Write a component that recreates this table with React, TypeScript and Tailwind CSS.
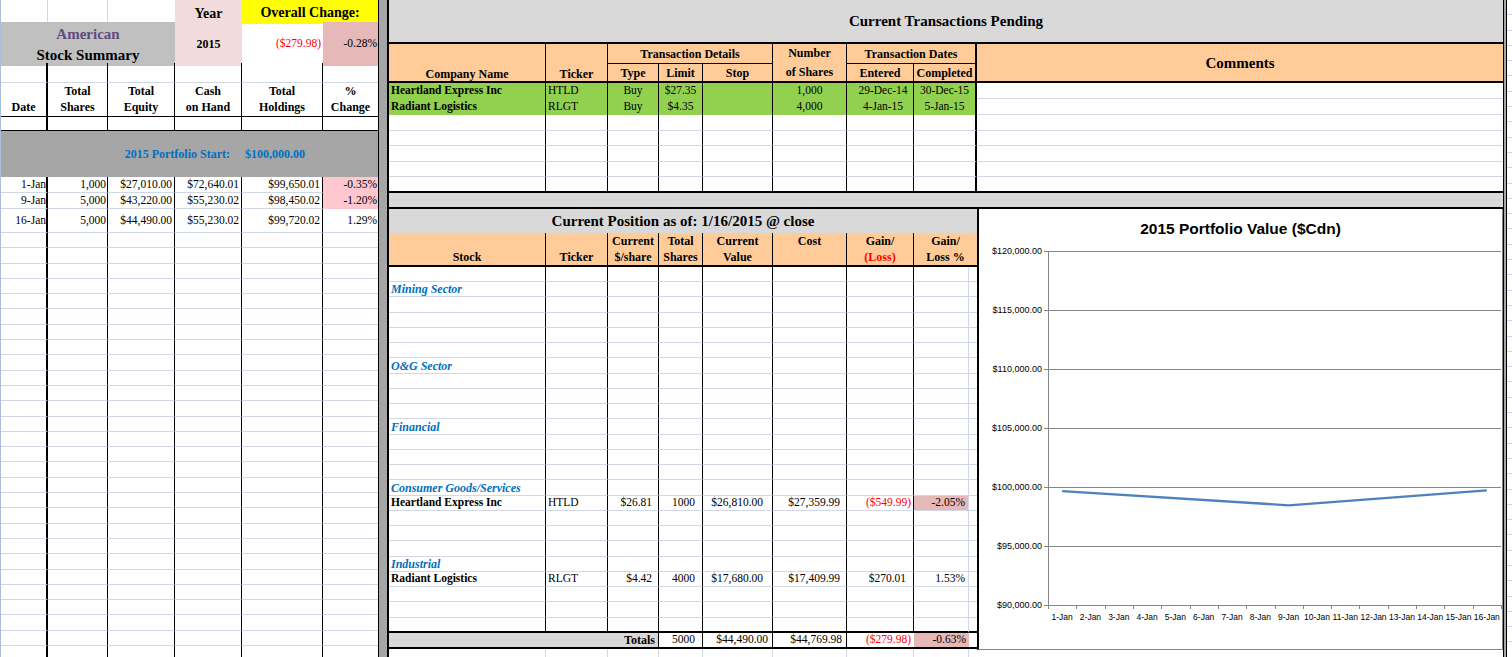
import React from "react";

// ---------------------------------------------------------------------------
// Column templates + border presets (spreadsheet look)
// ---------------------------------------------------------------------------

const GRIDLINE = "border-b border-b-[#d0d7e5]";
const BLACK_R = "border-r border-r-black";

const L_COLS = "grid grid-cols-[47px_60px_67px_67px_81px_55px]";
const L_V = ["border-r-2 border-r-black", BLACK_R, BLACK_R, BLACK_R, BLACK_R, ""];

const T_COLS = "grid grid-cols-[157px_62px_51px_44px_70px_74px_67px_63px_526px]";
const T_V = [BLACK_R, BLACK_R, BLACK_R, BLACK_R, BLACK_R, BLACK_R, BLACK_R, "border-r-2 border-r-black", ""];

const P_COLS = "grid grid-cols-[157px_62px_51px_44px_70px_74px_67px_55px_8px]";
const P_V = [BLACK_R, BLACK_R, BLACK_R, BLACK_R, BLACK_R, BLACK_R, BLACK_R, "border-r border-r-[#d0d7e5]", ""];
const P_LIGHT = [
  "border-r border-r-[#d0d7e5]",
  "border-r border-r-[#d0d7e5]",
  "border-r border-r-[#d0d7e5]",
  "border-r border-r-[#d0d7e5]",
  "border-r border-r-[#d0d7e5]",
  "border-r border-r-[#d0d7e5]",
  "border-r border-r-[#d0d7e5]",
  "border-r border-r-[#d0d7e5]",
  "",
];

// ---------------------------------------------------------------------------
// Data
// ---------------------------------------------------------------------------

const SUMMARY_ROWS = [
  { h: "h-[16px]", cells: ["1-Jan", "1,000", "$27,010.00", "$72,640.01", "$99,650.01", "-0.35%"], flag: true },
  { h: "h-[16px]", cells: ["9-Jan", "5,000", "$43,220.00", "$55,230.02", "$98,450.02", "-1.20%"], flag: true },
  { h: "h-[24px]", cells: ["16-Jan", "5,000", "$44,490.00", "$55,230.02", "$99,720.02", "1.29%"], flag: false },
];
const L_PAD = ["pr-0", "pr-[1px]", "pr-[2px]", "pr-[2px]", "pr-[2px]", "pr-[1px]"];

const PENDING = [
  ["Heartland Express Inc", "HTLD", "Buy", "$27.35", "", "1,000", "29-Dec-14", "30-Dec-15", ""],
  ["Radiant Logistics", "RLGT", "Buy", "$4.35", "", "4,000", "4-Jan-15", "5-Jan-15", ""],
];
const T_ALIGN = [
  "justify-start pl-[2px] font-bold",
  "justify-start pl-[2px]",
  "justify-center",
  "justify-center",
  "justify-center",
  "justify-center",
  "justify-center pl-[6px]",
  "justify-center",
  "",
];

type PosRow =
  | { kind: "sector"; label: string }
  | {
      kind: "stock";
      name: string;
      ticker: string;
      price: string;
      shares: string;
      value: string;
      cost: string;
      gain: string;
      pct: string;
      loss: boolean;
    };

const POSITIONS: Record<number, PosRow> = {
  1: { kind: "sector", label: "Mining Sector" },
  6: { kind: "sector", label: "O&G Sector" },
  10: { kind: "sector", label: "Financial" },
  14: { kind: "sector", label: "Consumer Goods/Services" },
  15: {
    kind: "stock",
    name: "Heartland Express Inc",
    ticker: "HTLD",
    price: "$26.81",
    shares: "1000",
    value: "$26,810.00",
    cost: "$27,359.99",
    gain: "($549.99)",
    pct: "-2.05%",
    loss: true,
  },
  19: { kind: "sector", label: "Industrial" },
  20: {
    kind: "stock",
    name: "Radiant Logistics",
    ticker: "RLGT",
    price: "$4.42",
    shares: "4000",
    value: "$17,680.00",
    cost: "$17,409.99",
    gain: "$270.01",
    pct: "1.53%",
    loss: false,
  },
};
const P_ALIGN = [
  "justify-start pl-[2px]",
  "justify-start pl-[2px]",
  "justify-end pr-[6px]",
  "justify-end pr-[7px]",
  "justify-end pr-[9px]",
  "justify-end pr-[6px]",
  "justify-end pr-[2px]",
  "justify-end pr-[3px]",
  "",
];

const PORTFOLIO = [
  { day: 0, value: 99650.01 },
  { day: 8, value: 98450.02 },
  { day: 15, value: 99720.02 },
];

// ---------------------------------------------------------------------------
// Left: American Stock Summary
// ---------------------------------------------------------------------------

function Summary() {
  return (
    <div className="flex h-full w-[378px] flex-none flex-col overflow-hidden border-l border-l-[#a9c0dc]">
      <div className={`${L_COLS} h-[22px] flex-none`}>
        <div className="border-r border-b border-[#d0d7e5]" />
        <div className="border-r border-b border-[#d0d7e5]" />
        <div className="border-b border-[#d0d7e5]" />
        <div className="flex items-center justify-center bg-[#f2dcdb] pt-[3px] text-[14px] font-bold">Year</div>
        <div className="col-span-2 flex items-center justify-center bg-[#ffff00] pt-[1px] text-[14px] font-bold">
          Overall Change:
        </div>
      </div>

      <div className={`${L_COLS} h-[41px] flex-none`}>
        <div className="col-span-3 flex flex-col items-center justify-center bg-[#c0c0c0] pt-[2px] text-[15px] font-bold leading-[21px]">
          <span className="text-[#604a7b]">American</span>
          <span>Stock Summary</span>
        </div>
        <div className="flex items-center justify-center bg-[#f2dcdb] text-[12px] font-bold">2015</div>
        <div className="flex items-center justify-end pr-[2px] text-[11.5px] text-[#ff0000]">($279.98)</div>
        <div className="flex items-center justify-end bg-[#e6b8b7] pr-[1px] text-[11.5px]">-0.28%</div>
      </div>

      <div className={`${L_COLS} h-[20px] flex-none`}>
        {L_V.map((v, i) => (
          <div key={i} className={`${GRIDLINE} ${v}`} />
        ))}
      </div>

      <div className={`${L_COLS} h-[33px] flex-none text-[12px] font-bold leading-[16px]`}>
        {[["Date"], ["Total", "Shares"], ["Total", "Equity"], ["Cash", "on Hand"], ["Total", "Holdings"], ["%", "Change"]].map(
          (lines, i) => (
            <div
              key={i}
              className={`flex flex-col items-center justify-end border-b border-b-black pb-[1px] text-center ${L_V[i]}`}
            >
              {lines.map((l) => (
                <span key={l}>{l}</span>
              ))}
            </div>
          ),
        )}
      </div>

      <div className={`${L_COLS} h-[15px] flex-none`}>
        {L_V.map((v, i) => (
          <div key={i} className={`border-b border-b-black ${v}`} />
        ))}
      </div>

      <div className="flex h-[46px] flex-none items-center bg-[#a6a6a6] text-[12px] font-bold text-[#0070c0]">
        <span className="w-[241px] pr-[12px] text-right">2015 Portfolio Start:</span>
        <span className="pl-[3px]">$100,000.00</span>
      </div>

      {SUMMARY_ROWS.map((row) => (
        <div key={row.cells[0]} className={`${L_COLS} ${row.h} flex-none text-[11.5px] leading-none`}>
          {row.cells.map((c, i) => {
            const pink = i === 5 && row.flag;
            return (
              <div
                key={i}
                className={`flex items-center justify-end ${L_PAD[i]} ${L_V[i]} ${pink ? "bg-[#ffc7ce]" : GRIDLINE}`}
              >
                {c}
              </div>
            );
          })}
        </div>
      ))}

      {Array.from({ length: 28 }).map((_, r) => (
        <div key={r} className={`${L_COLS} h-[15.3px] flex-none`}>
          {L_V.map((v, i) => (
            <div key={i} className={`${GRIDLINE} ${v}`} />
          ))}
        </div>
      ))}
    </div>
  );
}

// ---------------------------------------------------------------------------
// Top: Current Transactions Pending
// ---------------------------------------------------------------------------

function PendingTransactions() {
  return (
    <div className="flex flex-none flex-col">
      <div className="flex h-[44px] items-center justify-center border-b-2 border-b-black bg-[#d9d9d9] text-[15px] font-bold">
        Current Transactions Pending
      </div>

      <div className="flex h-[39px] border-b-2 border-b-black bg-[#ffcc99] text-[12px] font-bold leading-[14px]">
        <div className="flex w-[157px] items-end justify-center border-r border-r-black">Company Name</div>
        <div className="flex w-[62px] items-end justify-center border-r border-r-black">Ticker</div>
        <div className="flex w-[165px] flex-col border-r border-r-black">
          <div className="flex h-[20px] items-center justify-center border-b border-b-black">Transaction Details</div>
          <div className="flex flex-1">
            <div className="flex w-[51px] items-center justify-center border-r border-r-black">Type</div>
            <div className="flex w-[44px] items-center justify-center border-r border-r-black">Limit</div>
            <div className="flex flex-1 items-center justify-center">Stop</div>
          </div>
        </div>
        <div className="flex w-[74px] flex-col items-center justify-center border-r border-r-black leading-[19px]">
          <span>Number</span>
          <span>of Shares</span>
        </div>
        <div className="flex w-[130px] flex-col border-r-2 border-r-black">
          <div className="flex h-[20px] items-center justify-center border-b border-b-black">Transaction Dates</div>
          <div className="flex flex-1">
            <div className="flex w-[67px] items-center justify-center border-r border-r-black">Entered</div>
            <div className="flex flex-1 items-center justify-center">Completed</div>
          </div>
        </div>
        <div className="flex flex-1 items-center justify-center text-[15px]">Comments</div>
      </div>

      {PENDING.map((row) => (
        <div key={row[1]} className={`${T_COLS} h-[16px] text-[11.5px] leading-none`}>
          {row.map((c, i) => (
            <div
              key={i}
              className={`flex items-center whitespace-nowrap ${T_ALIGN[i]} ${T_V[i]} ${i === 8 ? GRIDLINE : "bg-[#92d050]"}`}
            >
              {c}
            </div>
          ))}
        </div>
      ))}

      {Array.from({ length: 5 }).map((_, r) => (
        <div key={r} className={`${T_COLS} h-[15.6px]`}>
          {T_V.map((v, i) => (
            <div key={i} className={`${r === 4 ? "border-b-2 border-b-black" : GRIDLINE} ${v}`} />
          ))}
        </div>
      ))}

      <div className="h-[16px] border-b-2 border-b-black bg-[#d9d9d9]" />
    </div>
  );
}

// ---------------------------------------------------------------------------
// Middle: Current Position
// ---------------------------------------------------------------------------

function PositionRow({ index }: { index: number }) {
  const row = POSITIONS[index];
  const hb = index === 23 ? "border-b-2 border-b-black" : GRIDLINE;
  const cells: React.ReactNode[] = Array(9).fill(null);

  if (row?.kind === "sector") {
    cells[0] = <span className="text-[12px] font-semibold italic text-[#0070c0]">{row.label}</span>;
  } else if (row?.kind === "stock") {
    cells[0] = <span className="font-bold">{row.name}</span>;
    cells[1] = row.ticker;
    cells[2] = row.price;
    cells[3] = row.shares;
    cells[4] = row.value;
    cells[5] = row.cost;
    cells[6] = <span className={row.loss ? "text-[#ff0000]" : "pr-[5px]"}>{row.gain}</span>;
    cells[7] = row.pct;
  }

  return (
    <div className={`${P_COLS} h-[15.25px] text-[11.5px] leading-none`}>
      {cells.map((c, i) => {
        const pink = i === 7 && row?.kind === "stock" && row.loss;
        return (
          <div
            key={i}
            className={`flex items-center whitespace-nowrap ${P_ALIGN[i]} ${P_V[i]} ${hb} ${pink ? "bg-[#e6b8b7]" : ""}`}
          >
            {c}
          </div>
        );
      })}
    </div>
  );
}

function CurrentPosition() {
  return (
    <div className="flex w-[588px] flex-none flex-col">
      <div className="flex h-[24px] items-center justify-center bg-[#d9d9d9] text-[15px] font-bold">
        Current Position as of: 1/16/2015 @ close
      </div>

      <div className="flex h-[34px] border-b-2 border-b-black bg-[#ffcc99] text-[12px] font-bold leading-[16px]">
        <div className="flex w-[157px] items-end justify-center border-r border-r-black">Stock</div>
        <div className="flex w-[62px] items-end justify-center border-r border-r-black">Ticker</div>
        <div className="flex w-[51px] flex-col items-center justify-center border-r border-r-black">
          <span>Current</span>
          <span>$/share</span>
        </div>
        <div className="flex w-[44px] flex-col items-center justify-center border-r border-r-black">
          <span>Total</span>
          <span>Shares</span>
        </div>
        <div className="flex w-[70px] flex-col items-center justify-center border-r border-r-black">
          <span>Current</span>
          <span>Value</span>
        </div>
        <div className="flex w-[74px] justify-center border-r border-r-black">Cost</div>
        <div className="flex w-[67px] flex-col items-center justify-center border-r border-r-black">
          <span>Gain/</span>
          <span className="text-[#ff0000]">(Loss)</span>
        </div>
        <div className="flex w-[63px] flex-col items-center justify-center">
          <span>Gain/</span>
          <span>Loss %</span>
        </div>
      </div>

      {Array.from({ length: 24 }).map((_, i) => (
        <PositionRow key={i} index={i} />
      ))}

      <div className="flex h-[16px] flex-none border-b-2 border-b-black text-[11.5px] leading-none">
        <div className="flex w-[270px] items-center justify-end border-r border-r-black bg-[#d9d9d9] pr-[3px] text-[12px] font-bold">
          Totals
        </div>
        <div className="flex w-[44px] items-center justify-end border-r border-r-black pr-[7px]">5000</div>
        <div className="flex w-[70px] items-center justify-end border-r border-r-black pr-[4px]">$44,490.00</div>
        <div className="flex w-[74px] items-center justify-end border-r border-r-black pr-[4px]">$44,769.98</div>
        <div className="flex w-[67px] items-center justify-end pr-[3px] text-[#ff0000]">($279.98)</div>
        <div className="flex w-[55px] items-center justify-end bg-[#e6b8b7] pr-[3px]">-0.63%</div>
        <div className="w-[8px]" />
      </div>

      <div className={`${P_COLS} h-[15px] flex-none`}>
        {P_LIGHT.map((v, i) => (
          <div key={i} className={`${GRIDLINE} ${v}`} />
        ))}
      </div>
    </div>
  );
}

// ---------------------------------------------------------------------------
// Right: 2015 Portfolio Value chart
// ---------------------------------------------------------------------------

function PortfolioChart() {
  const left = 69;
  const right = 522;
  const top = 4;
  const bottom = 358;
  const step = (right - left) / 16;
  const y = (v: number) => bottom - ((v - 90000) / 30000) * (bottom - top);
  const levels = [120000, 115000, 110000, 105000, 100000, 95000, 90000];
  const days = Array.from({ length: 16 }, (_, i) => `${i + 1}-Jan`);
  const line = PORTFOLIO.map((p) => `${left + (p.day + 0.5) * step},${y(p.value)}`).join(" ");

  return (
    <div className="flex w-[526px] flex-none flex-col font-['Liberation_Sans',Arial,sans-serif]">
      <div className="flex h-[441px] flex-none flex-col border-r border-b border-[#868686] border-l-2 border-l-black bg-white">
        <div className="flex h-[38px] flex-none items-center justify-center pt-[1px] text-[15.5px] font-bold">
          2015 Portfolio Value ($Cdn)
        </div>
        <svg width={523} height={402} className="block">
          {levels.map((v) => (
            <g key={v}>
              <line x1={left - 4} x2={right} y1={y(v) + 0.5} y2={y(v) + 0.5} stroke="#868686" strokeWidth={1} />
              <text x={left - 6} y={y(v) + 0.5} fontSize={9} textAnchor="end" dominantBaseline="middle" fill="#000">
                ${v.toLocaleString("en-US")}.00
              </text>
            </g>
          ))}
          <line x1={left + 0.5} x2={left + 0.5} y1={top} y2={bottom + 4} stroke="#868686" />
          {Array.from({ length: 17 }).map((_, k) => (
            <line
              key={k}
              x1={Math.round(left + k * step) + 0.5}
              x2={Math.round(left + k * step) + 0.5}
              y1={bottom}
              y2={bottom + 4}
              stroke="#868686"
            />
          ))}
          {days.map((d, i) => (
            <text
              key={d}
              x={left + (i + 0.5) * step}
              y={371}
              fontSize={8.5}
              textAnchor="middle"
              dominantBaseline="middle"
              fill="#000"
            >
              {d}
            </text>
          ))}
          <polyline points={line} fill="none" stroke="#4f81bd" strokeWidth={2.25} strokeLinejoin="round" />
        </svg>
      </div>
      <div className="flex-1 border-b border-b-[#d0d7e5]" />
    </div>
  );
}

// ---------------------------------------------------------------------------
// Page
// ---------------------------------------------------------------------------

export default function App() {
  return (
    <div className="flex h-[657px] w-[1512px] overflow-hidden bg-white font-['Liberation_Serif','Times_New_Roman',serif] text-black">
      <Summary />

      {/* frozen-pane splitter */}
      <div className="h-full w-[11px] flex-none border-l border-l-black border-r-2 border-r-black bg-[#a6a6a6]" />

      <div className="flex h-full w-[1114px] flex-none flex-col">
        <PendingTransactions />
        <div className="flex flex-1">
          <CurrentPosition />
          <PortfolioChart />
        </div>
      </div>

      <div className="flex h-full flex-none">
        <div className="h-full w-[4px] border-x border-x-black bg-[#a6a6a6]" />
        <div className="flex w-[5px] flex-col">
          {Array.from({ length: 43 }).map((_, i) => (
            <div key={i} className={`h-[15.3px] flex-none ${GRIDLINE}`} />
          ))}
        </div>
      </div>
    </div>
  );
}
